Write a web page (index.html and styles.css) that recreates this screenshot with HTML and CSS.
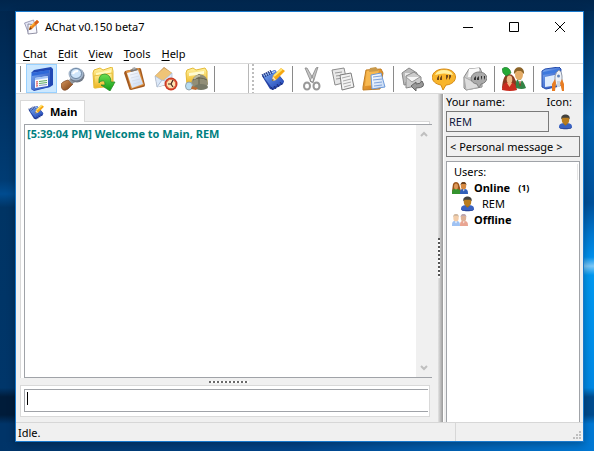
FILE: index.html
```
<!DOCTYPE html>
<html lang="en">
<head>
<meta charset="utf-8">
<title>AChat v0.150 beta7</title>
<link rel="stylesheet" href="styles.css">
</head>
<body>
<svg class="defs" width="0" height="0" aria-hidden="true">
  <defs>
    <linearGradient id="gBlue" x1="0" y1="0" x2="1" y2="1"><stop offset="0" stop-color="#7fb0f4"/><stop offset="1" stop-color="#1b3fb4"/></linearGradient>
    <linearGradient id="gYellow" x1="0" y1="0" x2="0" y2="1"><stop offset="0" stop-color="#fff3a0"/><stop offset="1" stop-color="#efb31c"/></linearGradient>
    <linearGradient id="gOrange" x1="0" y1="0" x2="1" y2="1"><stop offset="0" stop-color="#f7b84a"/><stop offset="1" stop-color="#c96f10"/></linearGradient>
    <linearGradient id="gPaper" x1="0" y1="0" x2="1" y2="1"><stop offset="0" stop-color="#ffffff"/><stop offset="1" stop-color="#c3d7f3"/></linearGradient>
    <linearGradient id="gGray" x1="0" y1="0" x2="1" y2="1"><stop offset="0" stop-color="#f6f6f6"/><stop offset="1" stop-color="#9c9c9c"/></linearGradient>
    <linearGradient id="gGreen" x1="0" y1="0" x2="0" y2="1"><stop offset="0" stop-color="#6be050"/><stop offset="1" stop-color="#129a18"/></linearGradient>
    <linearGradient id="gBrown" x1="0" y1="0" x2="1" y2="1"><stop offset="0" stop-color="#d99a60"/><stop offset="1" stop-color="#77390f"/></linearGradient>
    <symbol id="note" viewBox="0 0 24 24">
      <path d="m1 9 2-2 11-4 9 11-1 3-10 6-3-1z" fill="#2440a4"/>
      <path d="m1 8 13-5 9 12-12 6z" fill="url(#gBlue)"/>
      <path d="m3 8.500 11-4" stroke="#c4dcff"/>
      <path d="m1 7 2 4m0-5 2 4m0-5 2 4m0-5 2 4m0-5 2 4M10 20l2 3m1-4 2 3m1-5 2 3m1-5 2 3" stroke="#1c2f78"/>
      <path d="m11 14 1-5 8-8 4 3-9 9z" fill="#f6a712"/>
      <path d="m13 9 8-7" stroke="#ffe672" stroke-width="2"/>
      <path d="m11 14 1-5 3 4z" fill="#f5e2bb"/><path d="m11 14 .5-2 1.500 1z" fill="#333"/>
    </symbol>
    <symbol id="user" viewBox="0 0 16 16">
      <path d="M1 14c0-4 2-5 7-5s7 1 7 5c-3 2-11 2-14 0z" fill="#3a62c0"/>
      <path d="M2 14c3 1 9 1 12 0v1c-3 1-9 1-12 0z" fill="#233f94"/>
      <path d="M6 8h4v2l-2 2-2-2z" fill="#a66f19"/>
      <ellipse cx="8" cy="5.500" rx="4" ry="4.500" fill="#b97c1e"/>
      <path d="M3.500 5C3 1 6 0 8 0s5 1 4.500 5L11 3.500H5z" fill="#42413d"/>
    </symbol>
    <symbol id="pair" viewBox="0 0 16 12">
      <path d="M0 9 1 2q1-2 3-2t3 2l2 7-1 2H0z" fill="#9b5318"/>
      <path d="M0 12c0-5 1-5 4-5s5 1 5 5z" fill="#35932e"/>
      <ellipse cx="4" cy="4.500" rx="2" ry="3" fill="#dc9757"/>
      <path d="M8 12c0-5 1-5 4-5s4 1 4 5z" fill="#315fb9"/>
      <ellipse cx="11.500" cy="4" rx="2.700" ry="3.500" fill="#d78a42"/>
      <path d="M8.500 3.500c0-5 6-5 6 0l-1-1.500h-4z" fill="#6b421f"/>
      <path d="m11 7.500.8 2 .8-2z" fill="#fff"/>
    </symbol>
    <symbol id="pair-off" viewBox="0 0 16 12">
      <path d="M0 12c0-5 1-5 4-5s4 1 4 5z" fill="#9fc2f3"/>
      <ellipse cx="4" cy="4" rx="2.700" ry="3.500" fill="#f3cda9"/>
      <path d="M1 3.500c0-5 6-5 6 0L6 2H2z" fill="#d1b8a0"/>
      <path d="M8 12c0-5 1-5 4-5s4 1 4 5z" fill="#e9a592"/>
      <ellipse cx="11.500" cy="4" rx="2.700" ry="3.500" fill="#ddb297"/>
      <path d="M8.500 3.500c0-5 6-5 6 0l-1-1.500h-4z" fill="#bba6ae"/>
      <path d="m3 7.500 1 2 1-2m6 0 .8 2 .8-2z" fill="#fff"/>
    </symbol>
  </defs>
</svg>

<main class="window">
  <header class="titlebar">
    <svg class="app-icon" viewBox="0 0 16 16" aria-hidden="true">
      <path d="m.5 4 9-3 3 10-8 3z" fill="#e4e6f4" stroke="#8a8aa8" stroke-width=".8"/>
      <path d="m4 5 8 1 1 8-9 1z" fill="#f8f8fd" stroke="#77778f" stroke-width=".8"/>
      <path d="m5 11 1-4 7-6 2 2-7 7z" fill="#ef871c"/><path d="m7 7 6-5" stroke="#ffd45b"/>
      <path d="m10 4 2 2 3-3-2-2z" fill="#d9601a"/><path d="m5 11 1-3 2 2z" fill="#6b3a1a"/>
    </svg>
    <h1 class="title">AChat v0.150 beta7</h1>
    <div class="caption-buttons">
      <button class="caption" type="button" aria-label="Minimize"><svg viewBox="0 0 10 10" width="10" height="10"><path d="M0 5.500h10" stroke="#000"/></svg></button>
      <button class="caption" type="button" aria-label="Maximize"><svg viewBox="0 0 10 10" width="10" height="10"><path d="M.5.5h9v9h-9z" fill="none" stroke="#000"/></svg></button>
      <button class="caption" type="button" aria-label="Close"><svg viewBox="0 0 10 10" width="10" height="10"><path d="m0 0 10 10M10 0 0 10" stroke="#000"/></svg></button>
    </div>
  </header>

  <nav class="menubar">
    <button type="button"><u>C</u>hat</button>
    <button type="button"><u>E</u>dit</button>
    <button type="button"><u>V</u>iew</button>
    <button type="button"><u>T</u>ools</button>
    <button type="button"><u>H</u>elp</button>
  </nav>

  <div class="toolbar">
    <div class="tools tools-main">
      <span class="rule"></span>
      <button class="tool active" type="button" aria-label="Chat window"><svg viewBox="0 0 24 24">
        <path d="m1 6 3-3 17-3 2 2v16l-3 2-16 4-3-2z" fill="#2148b5"/>
        <path d="m1 6 19-3v17L4 23l-3-1z" fill="url(#gBlue)"/><path d="m2 6 17-3v3L2 9z" fill="#2f68d8"/>
        <path d="m5 11 13-2v10L5 21z" fill="#f7faff"/><path d="m5 11 13-2v2L5 13z" fill="#a5c4f4"/>
        <path d="m6 15 2-.2M6 17l2-.2M6 19l2-.2" stroke="#d33" /><path d="m9 14.500 8-1M9 16.500l8-1" stroke="#5bab5d"/><path d="m9 18.500 8-1" stroke="#8595bd"/>
      </svg></button>
      <button class="tool" type="button" aria-label="Search"><svg viewBox="0 0 24 24">
        <path d="M0 18q0-3 7-5l5 4-5 5q-6 4-7-4z" fill="url(#gBrown)" stroke="#7b4827" stroke-width=".7"/>
        <path d="m8 13 3-3 5 4-5 3z" fill="#8f969e"/>
        <ellipse cx="16" cy="8.500" rx="7.500" ry="7" fill="#717a88"/><ellipse cx="15" cy="7" rx="7.500" ry="6.500" fill="#a3b5ca"/>
        <ellipse cx="15" cy="6.500" rx="5.500" ry="5" fill="#cfe5fa" stroke="#6d86a2"/><path d="M12 7q1-3 5-3" stroke="#fff" stroke-width="2" fill="none"/>
      </svg></button>
      <button class="tool" type="button" aria-label="Receive files"><svg viewBox="0 0 24 24">
        <path d="m1 6 1-3 6-2 3 2 9-3 1 4v14L2 21z" fill="url(#gYellow)" stroke="#e4b936"/>
        <path d="m4 6 15-3v15L5 20z" fill="#fff9bd"/><path d="m2 9 18-3 1 13-18 2z" fill="url(#gYellow)" stroke="#e8c03c"/>
        <path d="M7 16q-1-9 6-9 6 1 6 8h4l-5 9-9-6h4q0-5-3-4-2 0-3 2z" fill="url(#gGreen)" stroke="#22852a" stroke-width=".7"/>
      </svg></button>
      <button class="tool" type="button" aria-label="Log"><svg viewBox="0 0 24 24">
        <path d="m2 4 14-3q2 0 2 1l4 16q0 2-2 2L8 23q-2 0-2-2L1 6z" fill="#a35a20"/>
        <path d="m3 4 13-3 5 17-13 4z" fill="#df9242"/><path d="m4 6 11-3 5 14-11 4z" fill="url(#gPaper)"/>
        <path d="m7 8 8-2M8 11l8-2M9 14l8-2M10 17l8-2" stroke="#d3d9e6" stroke-width=".8"/>
        <path d="m7 3 6-2 2 2-7 2z" fill="#777"/><path d="m9 1 3-1 1 2-3 1z" fill="#aaa"/>
      </svg></button>
      <button class="tool" type="button" aria-label="Reminders"><svg viewBox="0 0 24 24">
        <path d="m1 9 9-9 8 6v11L3 20z" fill="#b88343"/><path d="m1 9 9-8 8 5-8 10z" fill="#efc477"/>
        <path d="m1 9 8 5 9-8v10L3 20z" fill="#dce8f8" stroke="#a9bad3" stroke-width=".7"/><path d="m3 20 5-7 9 3" fill="#eff5fd" stroke="#adbfd7"/>
        <circle cx="17" cy="17" r="6.500" fill="#cd3920"/><circle cx="17" cy="17" r="4.700" fill="#ffe3b0" stroke="#e0694c"/>
        <path d="m17 17 2-4m-2 4h-3m3 0 2 3" stroke="#46231c" stroke-width="1.200"/>
      </svg></button>
      <button class="tool" type="button" aria-label="File spy"><svg viewBox="0 0 24 24">
        <path d="m1 6 1-3 6-2 3 2 9-2 2 3v14H2z" fill="url(#gYellow)" stroke="#e4b936"/>
        <path d="m4 6 15-2v3L4 9z" fill="#fffbd2"/>
        <path d="M6 18q0-8 8-11 9 1 9 10l-2 4-13 1z" fill="#918e77"/><path d="M8 13q7-4 14 0M14 7v13" stroke="#65624f" fill="none"/>
        <path d="M9 12q3-4 6-3" stroke="#bcb9a0" stroke-width="2" fill="none"/>
        <ellipse cx="16" cy="20" rx="7" ry="3" fill="#777967"/>
        <ellipse cx="4" cy="19" rx="3.500" ry="4" fill="#b8dcf0" stroke="#8fa2ad"/><path d="m7 19 6 2-2 2-5-1z" fill="#b96c35"/>
      </svg></button>
      <span class="rule"></span>
    </div>
    <div class="tools tools-edit">
      <span class="grip"></span>
      <button class="tool" type="button" aria-label="New message"><svg><use href="#note"/></svg></button>
      <span class="rule"></span>
      <button class="tool" type="button" aria-label="Cut"><svg viewBox="0 0 24 24">
        <path d="m5 1 2 0 7 12-3 2zM18 0l-2 1-6 13 3 2z" fill="#c4c4c4" stroke="#858585" stroke-width=".8"/>
        <ellipse cx="7" cy="19" rx="3" ry="3.500" fill="none" stroke="#999" stroke-width="2"/><ellipse cx="16.500" cy="19" rx="3" ry="3.500" fill="none" stroke="#999" stroke-width="2"/>
        <circle cx="12" cy="13" r="1" fill="#eee"/>
      </svg></button>
      <button class="tool" type="button" aria-label="Copy"><svg viewBox="0 0 24 24">
        <path d="m1 3 12-2 3 14-12 3z" fill="#e8e8e8" stroke="#8c8c8c"/><path d="m4 6 7-1M5 9l7-1M5 12l7-1" stroke="#999"/>
        <path d="m9 8 11-2 3 14-12 3z" fill="#f2f2f2" stroke="#7c7c7c"/><path d="m11 11 8-2m-7 5 8-2m-8 5 8-2m-7 5 7-2" stroke="#aaa"/>
      </svg></button>
      <button class="tool" type="button" aria-label="Paste"><svg viewBox="0 0 24 24">
        <path d="m4 3 15-1 2 4-3 16-17 1V20z" fill="url(#gOrange)" stroke="#c07c21"/><path d="m5 4 12-1-3 15-11 1z" fill="#f7b850"/>
        <path d="m8 1 6-1 3 4-10 1z" fill="#c99a4c"/>
        <path d="m9 8 10-2 4 14-13 2z" fill="url(#gPaper)" stroke="#6c9ada"/><path d="m11 10 8-1m-8 4 9-1m-8 4 8-1m-8 4 8-1" stroke="#7ea2da"/>
      </svg></button>
      <span class="rule"></span>
      <button class="tool" type="button" aria-label="Reply to all"><svg viewBox="0 0 24 24">
        <path d="m1 6 7-5 8 5v10L3 18z" fill="#bbb" stroke="#888"/><path d="M4 6h10v9H4z" fill="#e8e8e8"/>
        <path d="m5 9 8-4 7 5v8L5 21z" fill="#ccc" stroke="#888"/><path d="m5 10 6 5 8-5" fill="#f6f6f6" stroke="#999"/>
        <path d="m10 19 5-4v2q5 0 6-3 5 7-6 7v3z" fill="#999" stroke="#666"/>
      </svg></button>
      <button class="tool" type="button" aria-label="Messages"><svg viewBox="0 0 24 24">
        <path d="M12 2c15 0 15 15 2 16l-3 5-2-5C-4 16-2 2 12 2z" fill="#f8b52c" stroke="#d68b15"/>
        <path d="M3 8q2-5 9-5t9 5q-9-3-18 0z" fill="#fff0a0"/>
        <path d="m7 8-2 3v2h2zm3 0-2 3v2h2zm4 0h2v2l-2 3zm3 0h2v2l-2 3z" fill="#704819"/>
      </svg></button>
      <button class="tool" type="button" aria-label="Mail message"><svg viewBox="0 0 24 24">
        <path d="m1 10 5-8 11-1 2 5v14L3 23l-2-2z" fill="#ccc" stroke="#888"/><path d="m6 2 10-1v9H5z" fill="#fafafa"/><path d="m1 10 8 4 9-4v10L3 23z" fill="#ddd" stroke="#aaa"/>
        <path d="M16 5c10 0 10 11 2 12l-2 4-2-4C5 16 7 5 16 5z" fill="#aaa" stroke="#808080"/>
        <path d="m13 9-2 2v2h2zm3 0-2 2v2h2zm2 0h1v2l-1 2zm3 0h1v2l-1 2z" fill="#333"/>
      </svg></button>
      <span class="rule"></span>
      <button class="tool" type="button" aria-label="Add users"><svg viewBox="0 0 24 24">
        <path d="M0 21Q1 7 7 7t8 12l-2 4z" fill="#893b20"/><path d="M0 23q0-8 7-8t8 8q-6 2-15 0z" fill="#c92d20"/>
        <ellipse cx="7.500" cy="12.500" rx="2.800" ry="4" fill="#f0bb88"/><path d="m5 16 2.500 4 2.500-4z" fill="#f0bb88"/>
        <path d="M14 21q-1-9 3-9t7 9q-4 2-10 0z" fill="#338346"/><ellipse cx="17" cy="7.500" rx="4" ry="5.500" fill="#e5ad68"/><path d="M12 7c-1-9 11-9 10 0l-3-3h-4z" fill="#8c6428"/><path d="m16 13 2 4 2-4z" fill="#fff"/><path d="M18 14v5" stroke="#b32d23"/>
        <path d="m3 0 3 1 2 2 1 3-3 2-2 1-3-3-1-4z" fill="#24a935" stroke="#237933" stroke-width=".6"/>
      </svg></button>
      <span class="rule"></span>
      <button class="tool" type="button" aria-label="Window tools"><svg viewBox="0 0 24 24">
        <path d="m1 4 3-2 14-2 2 2-1 17-14 3-4-2z" fill="url(#gBlue)" stroke="#234bab"/><path d="m2 5 16-3v3L2 8z" fill="#3d79de"/><path d="m4 10 14-3v11L4 20z" fill="#dfecfc"/>
        <path d="M14 18V9q1-4 4-6 3 2 3 6v9z" fill="#eef1f6" stroke="#8d97a8"/><circle cx="17.500" cy="9" r="1.500" fill="#5c83bc"/>
        <path d="m14 12-3 5v7h3l1-8zm7 0 2 5v7h-2l-2-8z" fill="#e87d24"/><path d="M16 14h3v6h-3z" fill="#ced6e0"/>
      </svg></button>
    </div>
  </div>

  <div class="content">
    <section class="chat">
      <div class="tabs" role="tablist">
        <button class="tab" type="button" role="tab" aria-selected="true"><svg><use href="#note"/></svg>Main</button>
      </div>
      <div class="page">
        <div class="log">
          <p class="line">[5:39:04 PM] Welcome to Main, REM</p>
          <div class="scroll">
            <button type="button" aria-label="Scroll up"><svg viewBox="0 0 8 6" width="8" height="6"><path d="m1 5 3-3 3 3" fill="none" stroke="#bfbfbf" stroke-width="2"/></svg></button>
            <button type="button" aria-label="Scroll down"><svg viewBox="0 0 8 6" width="8" height="6"><path d="m1 1 3 3 3-3" fill="none" stroke="#bfbfbf" stroke-width="2"/></svg></button>
          </div>
        </div>
      </div>
      <div class="split-h"><span></span></div>
      <div class="compose"><input type="text" aria-label="Message"></div>
    </section>
    <div class="split-v"><span></span></div>
    <aside class="side">
      <div class="profile-labels"><label for="name">Your name:</label><span>Icon:</span></div>
      <div class="profile">
        <input id="name" type="text" value="REM" readonly>
        <button class="avatar" type="button" aria-label="Choose icon"><svg><use href="#user"/></svg></button>
      </div>
      <button class="personal" type="button">&lt; Personal message &gt;</button>
      <div class="users">
        <h2>Users:</h2>
        <ul>
          <li class="group"><svg><use href="#pair"/></svg><b>Online</b><b class="count">(1)</b></li>
          <li class="person"><svg><use href="#user"/></svg><span>REM</span></li>
          <li class="group"><svg><use href="#pair-off"/></svg><b>Offline</b></li>
        </ul>
      </div>
    </aside>
  </div>

  <footer class="status">
    <span class="state">Idle.</span>
    <span class="extra"><svg viewBox="0 0 8 8" width="8" height="8"><path d="M6 0h2v2H6zM3 3h2v2H3zm3 0h2v2H6zM0 6h2v2H0zm3 0h2v2H3zm3 0h2v2H6z" fill="#bfbfbf"/></svg></span>
  </footer>
</main>
</body>
</html>
```
FILE: styles.css
```
* { box-sizing: border-box; }

body {
  margin: 0;
  min-height: 100vh;
  display: flex;
  padding: 11px 10px 9px 15px;
  color: #000;
  font: 11px/16px "Noto Sans", "Open Sans", sans-serif;
  background:
    linear-gradient(#00254c, #002a54) top / 100% 11px no-repeat,
    linear-gradient(90deg, #003468, #00448a 50%, #0078d4) bottom / 100% 9px no-repeat,
    linear-gradient(#00254c, #003c74 40%, #004c90 43%, #003464 46%, #00366a 86%, #001c3a 88%, #001c3a 92%, #003468 94%) left / 50% 100% no-repeat,
    linear-gradient(#002850, #0060ae 26%, #00509a 45%, #0078d0 52%, #0090ec 57%, #7cc8f8 59%, #0098f0 61%, #0088e4 86%, #004c8e 88%, #004c8e 92%, #0078d4 94%) right / 50% 100% no-repeat;
}

button, input {
  margin: 0;
  padding: 0;
  border: 0;
  border-radius: 0;
  background: none;
  color: inherit;
  font: inherit;
}

svg { display: block; }
.defs { position: absolute; }

.window {
  flex: 1;
  min-width: 0;
  display: flex;
  flex-direction: column;
  border: 1px solid #1979cc;
  background: #f0f0f0;
  box-shadow: 0 2px 8px rgba(0, 0, 0, 0.3);
}

.titlebar {
  display: flex;
  align-items: center;
  height: 30px;
  padding-left: 8px;
  background: #fff;
}
.app-icon { width: 16px; height: 16px; }
.title { flex: 1; margin: 0 0 0 5px; font-size: 11px; font-weight: 400; }
.caption-buttons { display: flex; }
.caption { display: grid; place-items: center; width: 46px; height: 30px; }

.menubar {
  display: flex;
  gap: 11px;
  height: 21px;
  padding: 4px 7px 0;
  background: #fff;
}
.menubar button { height: 16px; }
.menubar u { text-underline-offset: 2px; }

.toolbar {
  display: flex;
  height: 31px;
  border: solid #d9d9d9;
  border-width: 1px 0;
  background: #fff;
}
.tools { display: flex; align-items: center; }
.tools-main { flex: 0 0 233px; padding-left: 4px; border-right: 1px solid #b8b8b8; }
.tools-edit { flex: 1; padding-left: 3px; }
.rule { width: 1px; height: 26px; margin: 0 3px 0 4px; background: #8a8a8a; }
.tools-main .rule { margin: 0 5px 0 0; }
.tools-main .rule:last-child { margin: 0 0 0 2px; }
.tool { display: grid; place-items: center; width: 31px; height: 29px; }
.tool svg { width: 24px; height: 24px; }
.tool.active { border: 1px solid #99d1ff; background: #cce8ff; }
.grip { width: 2px; height: 29px; margin-right: 3px; background: repeating-linear-gradient(#bdbdbd 0 2px, #fff 2px 4px); }

.content { flex: 1; display: flex; min-height: 0; }
.chat { flex: 1; min-width: 0; display: flex; flex-direction: column; padding-left: 4px; }
.tabs { display: flex; align-items: flex-end; height: 27px; }
.tab {
  position: relative;
  display: flex;
  align-items: center;
  gap: 6px;
  width: 65px;
  height: 22px;
  margin-bottom: -1px;
  padding-left: 7px;
  border: solid #d9d9d9;
  border-width: 1px 1px 0;
  background: #fff;
  font-weight: 700;
}
.tab svg { width: 16px; height: 16px; }
.page { flex: 1; display: flex; margin-right: 8px; padding: 2px 0 0 3px; border: solid #d9d9d9; border-width: 1px 1px 0; background: #fff; }
.log { flex: 1; display: flex; margin-right: -3px; border: solid #a0a3a8; border-width: 1px 0 1px 1px; background: #fff; }
.line { flex: 1; margin: 0; padding: 1px 2px; color: #008080; font-weight: 700; }
.scroll { display: flex; flex-direction: column; justify-content: space-between; width: 16px; background: #f0f0f0; }
.scroll button { display: grid; place-items: center; height: 18px; }

.split-h { display: grid; place-items: center; height: 7px; }
.split-h span { width: 40px; height: 2px; background: repeating-linear-gradient(90deg, #6b6b6b 0 2px, #fff 2px 4px); }
.compose { margin: 0 8px 5px 0; padding: 3px 1px 4px 3px; border: 1px solid #d9d9d9; background: #fff; }
.compose input {
  display: block;
  width: 100%;
  height: 23px;
  padding: 0 2px 4px;
  border: solid #a0a3a8;
  border-width: 1px 0 1px 1px;
  background: linear-gradient(#000, #000) 2px 2px / 1px 13px no-repeat #fff;
  caret-color: transparent;
  outline: 0;
}
.compose input:not(:placeholder-shown):focus { caret-color: #000; }

.split-v { display: grid; place-items: center start; width: 5px; background: linear-gradient(90deg, #e4e4e4, #989898); }
.split-v span { width: 2px; height: 40px; background: repeating-linear-gradient(#555 0 2px, #fff 2px 4px); }

.side { flex: 0 0 140px; min-width: 0; display: flex; flex-direction: column; padding: 0 3px 0 2px; border-left: 1px solid #fff; }
.profile-labels { display: flex; justify-content: space-between; height: 17px; padding-right: 8px; }
.profile { display: flex; gap: 9px; height: 21px; padding-right: 7px; }
.profile input { flex: 1; min-width: 0; padding: 0 2px; border: 1px solid #7a7a7a; color: #101840; }
.avatar { display: grid; place-items: center; width: 15px; }
.avatar svg, .person svg { width: 15px; height: 16px; }
.personal { height: 21px; margin: 4px 0; padding-left: 3px; border: 1px solid #7a7a7a; text-align: left; }
.users { flex: 1; padding: 2px 0 0 5px; border: solid #a0a3a8; border-width: 1px 1px 0; background: #fff; }
.users h2 { margin: 0 1px 0 0; padding-left: 2px; border-right: 1px solid #e5e5e5; font: inherit; }
.users ul { margin: 0; padding: 0; list-style: none; }
.users li { display: flex; align-items: center; height: 16px; }
.group { gap: 6px; }
.group svg { width: 16px; height: 12px; }
.count { margin-left: 2px; font-size: 9px; }
.person { gap: 7px; padding-left: 8px; }

.status { display: flex; height: 19px; border-top: 1px solid #d7d7d7; line-height: 20px; }
.state { flex: 1; padding-left: 2px; }
.extra { display: flex; justify-content: flex-end; align-items: flex-end; width: 128px; padding: 0 2px 2px 0; border-left: 1px solid #d7d7d7; }
```
